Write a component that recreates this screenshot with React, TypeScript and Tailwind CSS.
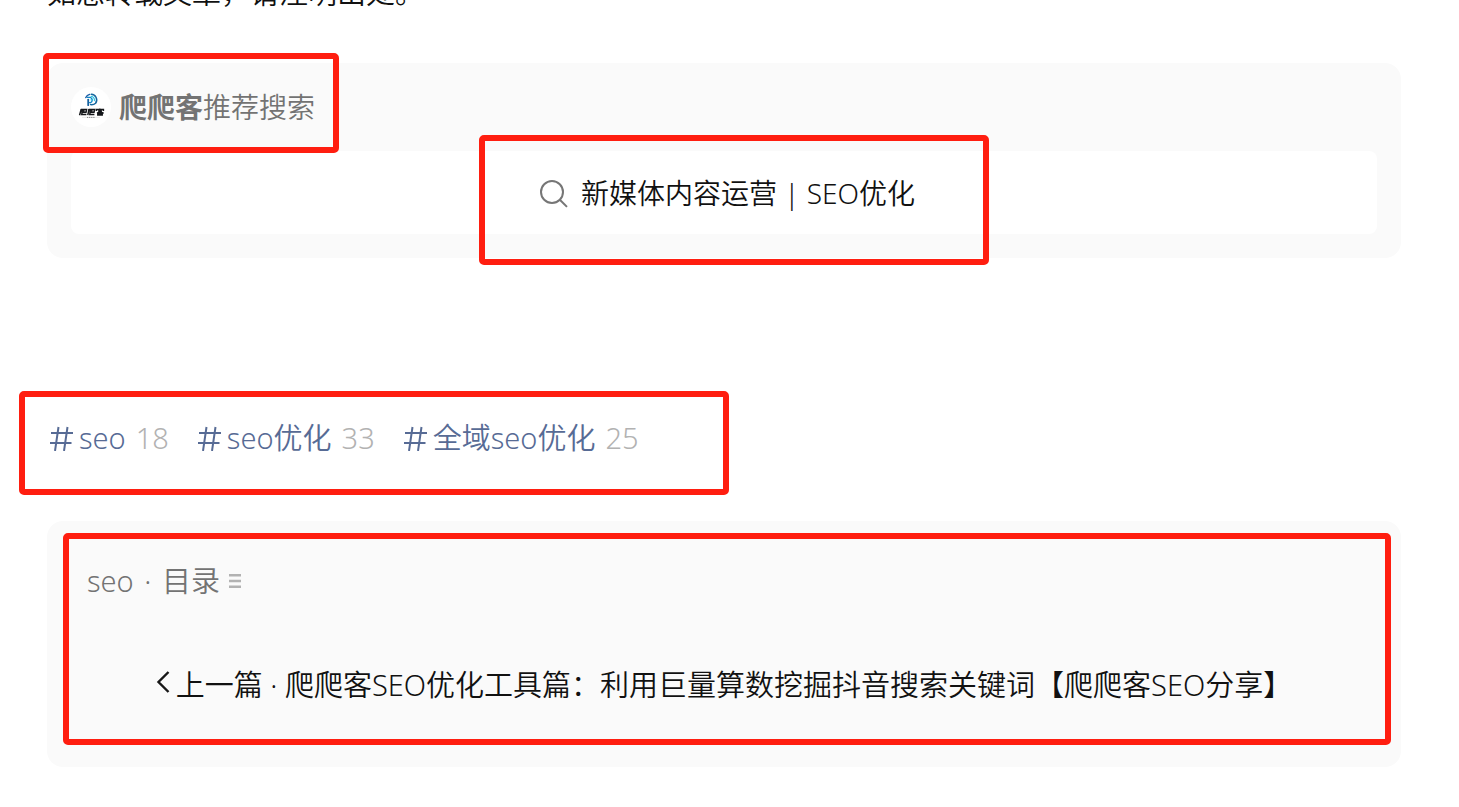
import type { ReactNode } from "react";

const tags = [
  { name: "seo", count: 18 },
  { name: "seo优化", count: 33 },
  { name: "全域seo优化", count: 25 },
];

function Highlight({ className }: { className: string }) {
  return (
    <span
      aria-hidden="true"
      className={`pointer-events-none absolute z-10 rounded-[5px] border-6 border-[#ff1e10] ${className}`}
    />
  );
}

function Card({ children, className }: { children: ReactNode; className: string }) {
  return <section className={`relative rounded-2xl bg-[#fafafa] ${className}`}>{children}</section>;
}

function Logo() {
  return (
    <svg viewBox="0 0 40 40" className="size-10 shrink-0" aria-hidden="true">
      <circle cx="20" cy="20" r="20" fill="#fff" />
      <g fill="none" strokeLinecap="round">
        <path d="M14.8 10.5A6 6 0 0 1 18.6 7.4" stroke="#1b5fa8" strokeWidth="1.5" />
        <path d="M20.3 7.3A5.6 5.6 0 0 1 24.6 16.2Q22.6 18 19.6 17.6" stroke="#16679f" strokeWidth="1.5" />
        <path d="M16.4 10.4H19.3A2.8 2.8 0 0 1 19.6 15.6H18.6" stroke="#0e86c8" strokeWidth="1.4" />
        <path d="M17.2 12.6V18.2" stroke="#15619f" strokeWidth="1.8" />
        <path d="M20.2 9.4A3.5 3.5 0 0 1 23.4 13.6" stroke="#2cc6e2" strokeWidth="1.2" />
        <path d="M20 12.8H20.8" stroke="#2cc6e2" strokeWidth="1.2" />
      </g>
      <g fill="none" stroke="#15171a" strokeWidth="1.5">
        <path d="M10.2 22.2L8.6 28.2M9.8 22.4H15.6L15 25.2H11.6M12.8 22.4V25.4M11.4 22.4L10.8 27.4H15.4" />
        <path d="M18 22.2L16.8 28.2M17.6 22.4H23.6L23 25.2H19.6M20.8 22.4V25.4M19.4 22.4L18.8 27.4H23.4" />
        <path d="M25.4 24V22.6H32.4V24M28.8 21.4V22.6M27.2 24H30.8L26 26.2M28 24.4L32.6 26.2M26.8 26.4H31.2V28H26.8Z" />
      </g>
      <path d="M11 30.4H29" stroke="#d5d5d5" strokeWidth="0.5" />
      <path d="M16 30.4H24" stroke="#777" strokeWidth="0.9" strokeDasharray="1.2 0.9" />
    </svg>
  );
}

export default function App() {
  return (
    <main className="min-h-screen overflow-hidden bg-white pr-[58px] pl-[47px] font-['Noto_Sans','Noto_Sans_CJK_SC',sans-serif] text-[28px] leading-10 font-[350] text-[#111]">
      <p className="-mt-[27px] text-[29px]">如想转载文章，请注明出处。</p>

      <Card className="mt-[50px] px-6 pt-6 pb-6">
        <Highlight className="-top-[10px] -left-1 h-[100px] w-[296px]" />
        <h2 className="flex items-center gap-2 text-[#737373]">
          <Logo />
          <span>
            <strong className="font-bold">爬爬客</strong>推荐搜索
          </span>
        </h2>
        <div className="mt-6 flex h-[83px] items-center justify-center rounded-lg bg-white pl-1.5">
          <a href="#search" className="relative flex items-center gap-3">
            <Highlight className="-top-[38px] -right-[74px] -bottom-[52px] -left-[60px]" />
            <svg viewBox="0 0 30 30" className="size-[30px]" fill="none" stroke="#767676" strokeWidth="2" aria-hidden="true">
              <circle cx="13" cy="14" r="11" />
              <path d="M20.8 21.7L28 28.9" />
            </svg>
            <span>新媒体内容运营 | SEO优化</span>
          </a>
        </div>
      </Card>

      <nav aria-label="标签" className="relative mt-[160px] flex gap-[26px] text-[29px] text-[#576b95]">
        <Highlight className="-top-[27px] -left-7 h-[104px] w-[710px]" />
        {tags.map((tag) => (
          <a key={tag.name} href="#tag" className="flex items-center">
            <svg viewBox="0 0 24 26" className="mr-1.5 ml-[2px] h-[26px] w-6" fill="none" stroke="#576b95" strokeWidth="2" aria-hidden="true">
              <path d="M9.5 2L6 26M18.5 2L15 26M2 8H24M1 18H22.5" />
            </svg>
            <span>{tag.name}</span>
            <span className="ml-[10px] text-[#b2b2b2]">{tag.count}</span>
          </a>
        ))}
      </nav>

      <Card className="mt-[63px] px-10 pt-10 pb-[62px] text-[29px]">
        <Highlight className="top-3 right-[10px] bottom-[22px] left-4" />
        <a href="#album" className="flex items-center gap-2 text-[#737373]">
          <span>
            seo <span className="mx-[3px]">·</span> 目录
          </span>
          <svg viewBox="0 0 14 14" className="size-[14px]" stroke="#b2b2b2" strokeWidth="2.4" aria-hidden="true">
            <path d="M1 1.2H13M1 7H13M1 12.8H13" />
          </svg>
        </a>
        <a href="#previous" className="mt-16 flex items-center justify-center gap-1.5 whitespace-nowrap">
          <svg viewBox="0 0 14 28" className="h-7 w-[14px]" fill="none" stroke="#171717" strokeWidth="2.4" aria-hidden="true">
            <path d="M12.5 1L2.5 11L12.5 21" />
          </svg>
          <span>上一篇 · 爬爬客SEO优化工具篇：利用巨量算数挖掘抖音搜索关键词【爬爬客SEO分享】</span>
        </a>
      </Card>
    </main>
  );
}
